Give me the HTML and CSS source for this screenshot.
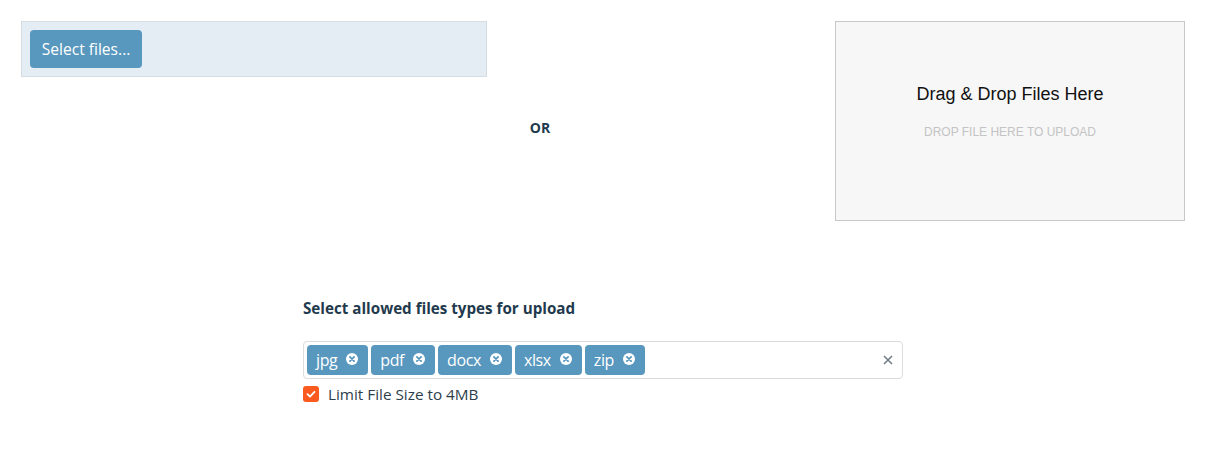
FILE: index.html
```html
<!DOCTYPE html>
<html lang="en">
<head>
<meta charset="utf-8">
<title>Upload</title>
<link rel="stylesheet" href="styles.css">
</head>
<body>
<div class="page">
  <div class="top-row">
    <div class="upload-bar">
      <button class="select-btn" type="button">Select files...</button>
    </div>
    <div class="or">OR</div>
    <div class="dropzone">
      <div class="drop-title">Drag &amp; Drop Files Here</div>
      <div class="drop-hint">DROP FILE HERE TO UPLOAD</div>
    </div>
  </div>

  <div class="types">
    <div class="types-label">Select allowed files types for upload</div>
    <div class="multiselect">
      <div class="tags">
        <span class="tag">jpg<svg class="tag-x" viewBox="0 0 12 12"><circle cx="6" cy="6" r="6" fill="#fff"/><path d="M3.9 3.9 8.1 8.1M8.1 3.9 3.9 8.1" stroke="#5897be" stroke-width="1.8" stroke-linecap="round"/></svg></span>
        <span class="tag">pdf<svg class="tag-x" viewBox="0 0 12 12"><circle cx="6" cy="6" r="6" fill="#fff"/><path d="M3.9 3.9 8.1 8.1M8.1 3.9 3.9 8.1" stroke="#5897be" stroke-width="1.8" stroke-linecap="round"/></svg></span>
        <span class="tag">docx<svg class="tag-x" viewBox="0 0 12 12"><circle cx="6" cy="6" r="6" fill="#fff"/><path d="M3.9 3.9 8.1 8.1M8.1 3.9 3.9 8.1" stroke="#5897be" stroke-width="1.8" stroke-linecap="round"/></svg></span>
        <span class="tag">xlsx<svg class="tag-x" viewBox="0 0 12 12"><circle cx="6" cy="6" r="6" fill="#fff"/><path d="M3.9 3.9 8.1 8.1M8.1 3.9 3.9 8.1" stroke="#5897be" stroke-width="1.8" stroke-linecap="round"/></svg></span>
        <span class="tag">zip<svg class="tag-x" viewBox="0 0 12 12"><circle cx="6" cy="6" r="6" fill="#fff"/><path d="M3.9 3.9 8.1 8.1M8.1 3.9 3.9 8.1" stroke="#5897be" stroke-width="1.8" stroke-linecap="round"/></svg></span>
      </div>
      <svg class="clear-x" viewBox="0 0 10 10"><path d="M1 1 9 9M9 1 1 9" stroke="#6f7f8a" stroke-width="1.6"/></svg>
    </div>
    <label class="limit">
      <span class="checkbox"><svg viewBox="0 0 16 16"><path d="M4.5 8.2 7 10.6 11.5 5.8" fill="none" stroke="#fff" stroke-width="1.8" stroke-linecap="round" stroke-linejoin="round"/></svg></span>
      <span class="limit-text">Limit File Size to 4MB</span>
    </label>
  </div>
</div>
</body>
</html>
```

FILE: styles.css
```css
* { box-sizing: border-box; }
html, body { margin: 0; padding: 0; background: #fff; }
body {
  font-family: "Segoe UI", "Open Sans", "Noto Sans", sans-serif;
  color: #1f3a4d;
}
.page { padding: 21px; }

.top-row {
  display: flex;
  align-items: flex-start;
}
.upload-bar {
  width: 466px;
  height: 56px;
  background: #e3edf3;
  border: 1px solid #d6dde2;
  padding: 8px;
}
.select-btn {
  width: 112px;
  height: 38px;
  border: 0;
  border-radius: 4px;
  background: #5897be;
  color: #fff;
  font-family: inherit;
  font-size: 15.6px;
  padding: 0;
}
.or {
  width: 106px;
  text-align: center;
  font-weight: 700;
  font-size: 14px;
  line-height: 20px;
  margin-top: 97px;
  color: #1f3a4d;
}
.dropzone {
  margin-left: auto;
  width: 350px;
  height: 200px;
  background: #f7f7f7;
  border: 1px solid #c8c8c8;
  display: flex;
  flex-direction: column;
  align-items: center;
  padding-top: 61px;
  font-family: "Liberation Sans", Arial, sans-serif;
}
.drop-title {
  font-size: 18px;
  line-height: 22px;
  color: #111;
}
.drop-hint {
  margin-top: 20px;
  font-size: 12px;
  line-height: 14px;
  color: #c4c4c4;
}

.types {
  width: 600px;
  margin: 77px auto 0;
}
.types-label {
  font-weight: 700;
  font-size: 15.2px;
  line-height: 20px;
  color: #1f3a4d;
}
.multiselect {
  margin-top: 23px;
  height: 38px;
  border: 1px solid #dcdcdc;
  border-radius: 4px;
  padding: 3px;
  display: flex;
  align-items: center;
}
.tags {
  display: flex;
  gap: 3px;
  flex: 1;
}
.tag {
  height: 30px;
  background: #5897be;
  color: #fff;
  border-radius: 4px;
  display: inline-flex;
  align-items: center;
  padding: 0 10px 0 9px;
  font-size: 16px;
  letter-spacing: -0.4px;
}
.tag-x {
  width: 12px;
  height: 12px;
  margin-left: 9px;
  margin-top: -2px;
}
.clear-x {
  width: 10px;
  height: 10px;
  margin-right: 6px;
}
.limit {
  display: flex;
  align-items: center;
  margin-top: 7px;
  height: 16px;
}
.checkbox {
  width: 16px;
  height: 16px;
  border-radius: 3px;
  background: #fb5a1f;
  display: inline-flex;
}
.checkbox svg { width: 16px; height: 16px; }
.limit-text {
  margin-left: 9px;
  font-size: 15.3px;
  color: #2d3e4a;
}
```
